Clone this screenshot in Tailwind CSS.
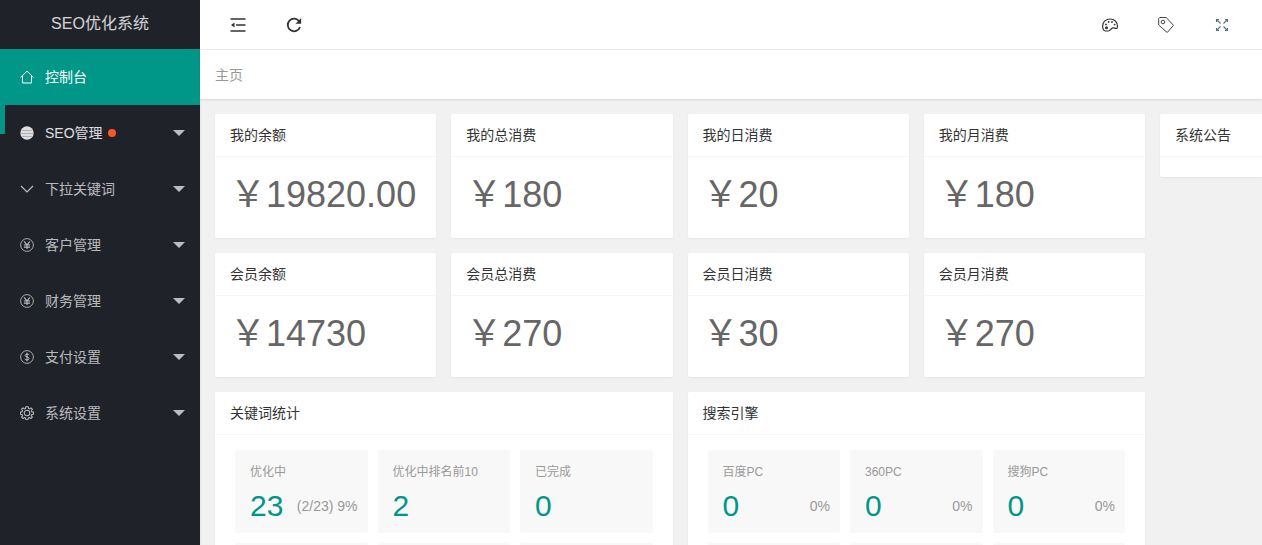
<!DOCTYPE html>
<html lang="zh-CN">
<head>
<meta charset="utf-8">
<title>SEO优化系统</title>
<script src="https://cdn.jsdelivr.net/npm/@tailwindcss/browser@4"></script>
</head>
<body class="flex h-screen overflow-hidden bg-[#f1f1f1] font-['Liberation_Sans','Noto_Sans_CJK_SC',sans-serif] text-sm text-[#333]">

<svg class="hidden">
  <symbol id="caret" viewBox="0 0 12 6"><path d="M0 0h12L6 6z" fill="currentColor"/></symbol>
  <symbol id="yen" viewBox="0 0 16 16"><g fill="none" stroke="currentColor"><circle cx="8" cy="8" r="7.300"/><path d="M4.600 3.800l3.400 4 3.400-4M8 7.800v4.900M4.500 8h7M4.500 10.400h7" stroke-width="1.200"/></g></symbol>
</svg>

<aside class="relative flex w-50 shrink-0 flex-col bg-[#20222a] text-white/70 shadow-[1px_0_2px_rgba(0,0,0,0.05)]">
  <h1 class="flex h-[49px] items-center justify-center pb-0.5 text-base text-white/80">SEO优化系统</h1>
  <nav>
    <ul>
      <li><a href="#" class="flex h-14 items-center bg-[#009688] pr-[15px] pl-5 text-white">
        <svg class="mr-[11px] size-3.5" viewBox="0 0 14 14" fill="none" stroke="currentColor" stroke-width="1"><path d="M.5 7.500L7 1.200l6.500 6.300M2.500 6v7h9V6"/></svg>控制台</a></li>
      <li class="relative"><span class="absolute top-0 left-0 h-[29px] w-[5px] bg-[#009688]"></span>
        <a href="#" class="flex h-14 items-center pr-[15px] pl-5 text-white/85">
        <svg class="mr-[11px] size-3.5" viewBox="0 0 14 14"><circle cx="7" cy="7" r="6.700" fill="#dedede"/><path d="M2 4.500h10M1 7.500h12M2 10.500h10" stroke="#a5a6ab" stroke-width=".8"/></svg>SEO管理<span class="ml-[5px] size-2 rounded-full bg-[#ff5722]"></span>
        <svg class="ml-auto h-1.5 w-3 text-white/70"><use href="#caret"/></svg></a></li>
      <li><a href="#" class="flex h-14 items-center pr-[15px] pl-5">
        <svg class="mr-[11px] size-3.5" viewBox="0 0 14 14" fill="none" stroke="currentColor" stroke-width="1.200"><path d="M1 4l6 6 6-6"/></svg>下拉关键词
        <svg class="ml-auto h-1.5 w-3"><use href="#caret"/></svg></a></li>
      <li><a href="#" class="flex h-14 items-center pr-[15px] pl-5">
        <svg class="mr-[11px] size-3.5"><use href="#yen"/></svg>客户管理
        <svg class="ml-auto h-1.5 w-3"><use href="#caret"/></svg></a></li>
      <li><a href="#" class="flex h-14 items-center pr-[15px] pl-5">
        <svg class="mr-[11px] size-3.5"><use href="#yen"/></svg>财务管理
        <svg class="ml-auto h-1.5 w-3"><use href="#caret"/></svg></a></li>
      <li><a href="#" class="flex h-14 items-center pr-[15px] pl-5">
        <svg class="mr-[11px] size-3.5" viewBox="0 0 16 16" fill="none" stroke="currentColor"><circle cx="8" cy="8" r="7.300"/><path d="M10.500 5.800C10 4.300 6 4.200 5.800 6.200 5.700 8.200 10.400 7.600 10.300 9.900 10.100 12 5.900 11.900 5.500 10M8 3.200v9.600" stroke-width="1.100"/></svg>支付设置
        <svg class="ml-auto h-1.5 w-3"><use href="#caret"/></svg></a></li>
      <li><a href="#" class="flex h-14 items-center pr-[15px] pl-5">
        <svg class="mr-[11px] size-3.5" viewBox="0 0 16 16" fill="none" stroke="currentColor" stroke-width="1.200" stroke-linejoin="round"><circle cx="8" cy="8" r="3.200"/><path d="M6.700 .8h2.600l.4 2 1.100.5 1.700-1.200 1.600 1.600-1.100 1.800.5 1.200 1.900.3v2.300l-2 .5-.5 1.200 1.200 1.700-1.700 1.600-1.700-1.100-1.200.5-.4 1.900H6.700l-.4-1.900-1.200-.5-1.700 1.100-1.600-1.600 1.100-1.700-.5-1.200-1.900-.5V7l1.900-.4.5-1.200-1.100-1.700 1.600-1.600 1.700 1.200 1.200-.5z"/></svg>系统设置
        <svg class="ml-auto h-1.5 w-3"><use href="#caret"/></svg></a></li>
    </ul>
  </nav>
</aside>

<div class="flex min-w-0 flex-1 flex-col">
  <header class="relative flex h-[50px] shrink-0 items-center justify-between border-b border-[#ececec] bg-white px-[30px]">
    <div class="flex gap-10">
      <button type="button" aria-label="折叠菜单"><svg class="size-4" viewBox="0 0 16 16" fill="none" stroke="#333" stroke-width="1.400"><path d="M.5 2h15M6 8h9.500M.5 14h15"/><path d="M1 8l3.500-2.500v5z" fill="#333" stroke="none"/></svg></button>
      <button type="button" aria-label="刷新"><svg class="size-4" viewBox="0 0 16 16" fill="none" stroke="#333" stroke-width="1.800"><path d="M13.300 4.500A6.300 6.300 0 1 0 14 10"/><path d="M15.200 1v5.800H9.500z" fill="#333" stroke="none"/></svg></button>
    </div>
    <div class="flex gap-10 pr-0.5">
      <button type="button" aria-label="主题"><svg class="size-4" viewBox="0 0 16 16" fill="none" stroke="#333" stroke-width="1.200"><path d="M3.500 14C1.500 13.800.6 11 .6 9 .6 4.800 4 2 8.200 2c4.200 0 7.200 3 7.200 7 0 1.500-.5 2.500-.9 2.500-1.200 0-2.300-1-3.700-.6-2 .6-2.300 3.100-4.500 3.100z"/><g fill="#333" stroke="none"><circle cx="4.500" cy="10.800" r="1.500"/><circle cx="4" cy="7.400" r=".9"/><circle cx="6.600" cy="5" r=".9"/><circle cx="10" cy="5" r=".9"/><circle cx="12.600" cy="7.600" r=".9"/></g></svg></button>
      <button type="button" aria-label="便签"><svg class="size-4" viewBox="0 0 16 16" fill="none" stroke="#444" stroke-width="1"><path d="M.7 1.500l1-1h6.500l7.300 7.800-6.300 7.200L.7 8z"/><circle cx="5" cy="5" r="1.800"/></svg></button>
      <button type="button" aria-label="全屏"><svg class="size-4" viewBox="0 0 16 16" fill="none" stroke="#557086" stroke-width="1.100"><path d="M2.500 5V2.500H5M2.500 2.500l4 4M11 2.500h2.500V5M13.500 2.500l-4 4M2.500 11v2.500H5M2.500 13.500l4-4M13.500 11v2.500H11M13.500 13.500l-4-4"/></svg></button>
    </div>
  </header>
  <div class="relative flex h-[49px] shrink-0 items-center bg-white px-[15px] text-[#999] shadow-[0_1px_2px_rgba(0,0,0,0.1)]">主页</div>

  <main class="flex min-h-0 flex-1 items-start gap-[15px] overflow-hidden pt-[15px] pl-[15px]">
    <div class="grid min-w-0 flex-1 grid-cols-4 gap-[15px]">
      <section class="rounded-xs bg-white shadow-[0_1px_2px_rgba(0,0,0,0.05)]"><h2 class="border-b border-[#f6f6f6] px-[15px] leading-[42px]">我的余额</h2><p class="h-[81px] px-[15px] pt-2.5 text-4xl/14 whitespace-nowrap text-[#666]">&#xFFE5;19820.00</p></section>
      <section class="rounded-xs bg-white shadow-[0_1px_2px_rgba(0,0,0,0.05)]"><h2 class="border-b border-[#f6f6f6] px-[15px] leading-[42px]">我的总消费</h2><p class="h-[81px] px-[15px] pt-2.5 text-4xl/14 whitespace-nowrap text-[#666]">&#xFFE5;180</p></section>
      <section class="rounded-xs bg-white shadow-[0_1px_2px_rgba(0,0,0,0.05)]"><h2 class="border-b border-[#f6f6f6] px-[15px] leading-[42px]">我的日消费</h2><p class="h-[81px] px-[15px] pt-2.5 text-4xl/14 whitespace-nowrap text-[#666]">&#xFFE5;20</p></section>
      <section class="rounded-xs bg-white shadow-[0_1px_2px_rgba(0,0,0,0.05)]"><h2 class="border-b border-[#f6f6f6] px-[15px] leading-[42px]">我的月消费</h2><p class="h-[81px] px-[15px] pt-2.5 text-4xl/14 whitespace-nowrap text-[#666]">&#xFFE5;180</p></section>
      <section class="rounded-xs bg-white shadow-[0_1px_2px_rgba(0,0,0,0.05)]"><h2 class="border-b border-[#f6f6f6] px-[15px] leading-[42px]">会员余额</h2><p class="h-[81px] px-[15px] pt-2.5 text-4xl/14 whitespace-nowrap text-[#666]">&#xFFE5;14730</p></section>
      <section class="rounded-xs bg-white shadow-[0_1px_2px_rgba(0,0,0,0.05)]"><h2 class="border-b border-[#f6f6f6] px-[15px] leading-[42px]">会员总消费</h2><p class="h-[81px] px-[15px] pt-2.5 text-4xl/14 whitespace-nowrap text-[#666]">&#xFFE5;270</p></section>
      <section class="rounded-xs bg-white shadow-[0_1px_2px_rgba(0,0,0,0.05)]"><h2 class="border-b border-[#f6f6f6] px-[15px] leading-[42px]">会员日消费</h2><p class="h-[81px] px-[15px] pt-2.5 text-4xl/14 whitespace-nowrap text-[#666]">&#xFFE5;30</p></section>
      <section class="rounded-xs bg-white shadow-[0_1px_2px_rgba(0,0,0,0.05)]"><h2 class="border-b border-[#f6f6f6] px-[15px] leading-[42px]">会员月消费</h2><p class="h-[81px] px-[15px] pt-2.5 text-4xl/14 whitespace-nowrap text-[#666]">&#xFFE5;270</p></section>

      <section class="col-span-2 rounded-xs bg-white shadow-[0_1px_2px_rgba(0,0,0,0.05)]">
        <h2 class="border-b border-[#f6f6f6] px-[15px] leading-[42px]">关键词统计</h2>
        <div class="grid grid-cols-3 gap-2.5 px-5 py-[15px] text-[#999]">
          <a href="#" class="h-[83px] rounded-xs bg-[#f8f8f8] pt-3 pr-2.5 pl-[15px]"><h3 class="text-xs/5">优化中</h3><p class="flex items-center justify-between"><span class="text-3xl/12 text-[#009688]">23</span><span>(2/23) 9%</span></p></a>
          <a href="#" class="h-[83px] rounded-xs bg-[#f8f8f8] pt-3 pr-2.5 pl-[15px]"><h3 class="text-xs/5">优化中排名前10</h3><p class="text-3xl/12 text-[#009688]">2</p></a>
          <a href="#" class="h-[83px] rounded-xs bg-[#f8f8f8] pt-3 pr-2.5 pl-[15px]"><h3 class="text-xs/5">已完成</h3><p class="text-3xl/12 text-[#009688]">0</p></a>
          <div class="h-[83px] rounded-xs bg-[#f8f8f8]"></div><div class="h-[83px] rounded-xs bg-[#f8f8f8]"></div><div class="h-[83px] rounded-xs bg-[#f8f8f8]"></div>
        </div>
      </section>
      <section class="col-span-2 rounded-xs bg-white shadow-[0_1px_2px_rgba(0,0,0,0.05)]">
        <h2 class="border-b border-[#f6f6f6] px-[15px] leading-[42px]">搜索引擎</h2>
        <div class="grid grid-cols-3 gap-2.5 px-5 py-[15px] text-[#999]">
          <a href="#" class="h-[83px] rounded-xs bg-[#f8f8f8] pt-3 pr-2.5 pl-[15px]"><h3 class="text-xs/5">百度PC</h3><p class="flex items-center justify-between"><span class="text-3xl/12 text-[#009688]">0</span><span>0%</span></p></a>
          <a href="#" class="h-[83px] rounded-xs bg-[#f8f8f8] pt-3 pr-2.5 pl-[15px]"><h3 class="text-xs/5">360PC</h3><p class="flex items-center justify-between"><span class="text-3xl/12 text-[#009688]">0</span><span>0%</span></p></a>
          <a href="#" class="h-[83px] rounded-xs bg-[#f8f8f8] pt-3 pr-2.5 pl-[15px]"><h3 class="text-xs/5">搜狗PC</h3><p class="flex items-center justify-between"><span class="text-3xl/12 text-[#009688]">0</span><span>0%</span></p></a>
          <div class="h-[83px] rounded-xs bg-[#f8f8f8]"></div><div class="h-[83px] rounded-xs bg-[#f8f8f8]"></div><div class="h-[83px] rounded-xs bg-[#f8f8f8]"></div>
        </div>
      </section>
    </div>
    <section class="w-[102px] shrink-0 rounded-l-xs bg-white pb-5 shadow-[0_1px_2px_rgba(0,0,0,0.05)]"><h2 class="border-b border-[#f6f6f6] px-[15px] leading-[42px]">系统公告</h2></section>
  </main>
</div>
</body>
</html>
